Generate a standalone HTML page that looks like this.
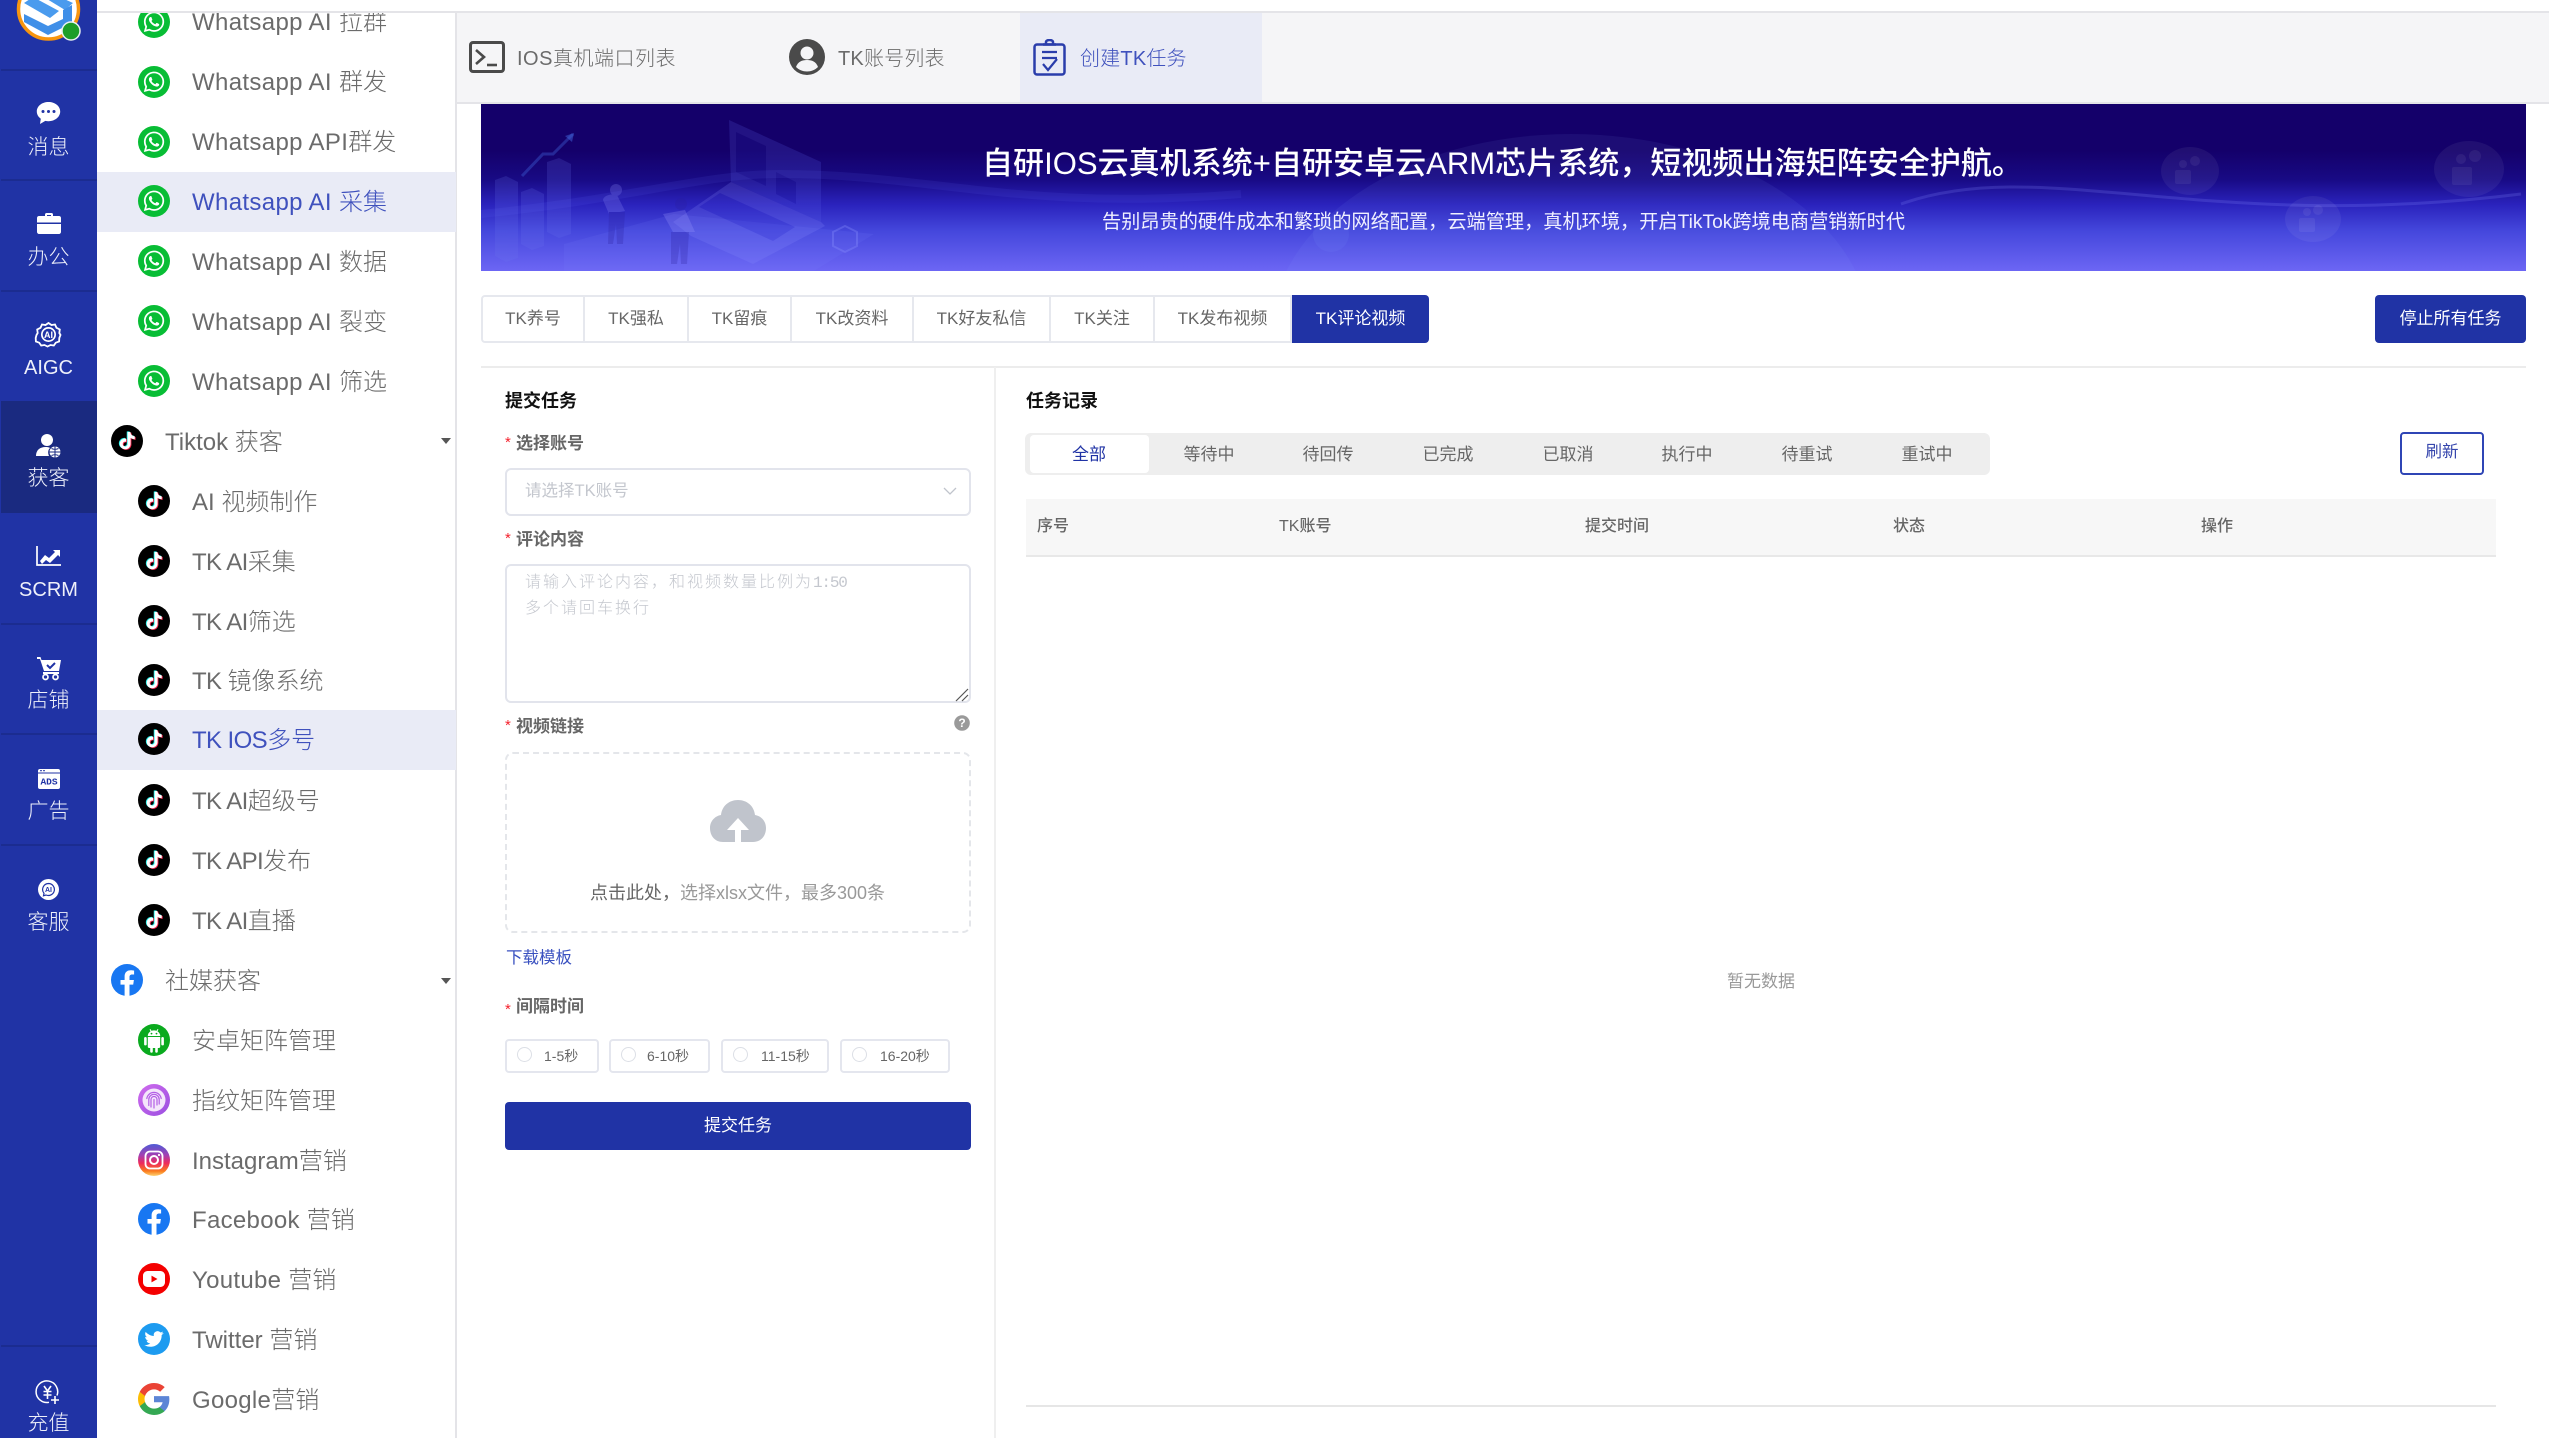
<!DOCTYPE html>
<html lang="zh-CN">
<head>
<meta charset="utf-8">
<title>TK评论视频</title>
<style>
*{box-sizing:border-box;margin:0;padding:0}
html,body{width:2553px;height:1438px;overflow:hidden;background:#fff}
body{position:relative;font-family:"Liberation Sans","Noto Sans CJK SC",sans-serif;color:#666}
.a{position:absolute}
.t{position:absolute;white-space:nowrap;line-height:40px;height:40px}
#nav{position:absolute;left:0;top:0;width:97px;height:1438px;background:#2033a5;overflow:hidden}
#nav .ln{position:absolute;left:1px;width:96px;height:2px;background:#1b2c90}
#nav .lb{position:absolute;left:0;width:97px;text-align:center;color:#eef0fa;font-size:21px;line-height:30px;height:30px;font-weight:300;white-space:nowrap;margin-top:1.5px}
#nav svg{position:absolute;overflow:visible}
#side{position:absolute;left:97px;top:0;width:360px;height:1438px;background:#fff;border-right:2px solid #e4e4e8;overflow:hidden}
.r{position:absolute;left:97px;width:359px;height:60px}
.r.on{background:#e9ebf6}
.ic{position:absolute;width:32px;height:32px}
.rt{position:absolute;left:192px;font-size:24px;line-height:40px;height:40px;white-space:nowrap;color:#6b6b6b;font-weight:300;margin-top:.6px}
.rt.g{left:165px}
.rt.on{color:#3f51bd}
.caret{position:absolute;left:441px;width:0;height:0;border-left:5px solid transparent;border-right:5px solid transparent;border-top:6px solid #555}
.w{letter-spacing:.35px}
.k{letter-spacing:-.6px}
.s{letter-spacing:.3px}
#tb{position:absolute;left:457px;top:11px;width:2092px;height:93px;background:#f5f5f7;border-top:2px solid #e4e4e8;border-bottom:2px solid #e4e4e8}
#tbtop{position:absolute;left:97px;top:0;width:2456px;height:11px;background:#fff}
#tbl{position:absolute;left:97px;top:11px;width:360px;height:2px;background:#e4e4e8}
.tab{position:absolute;top:295px;height:48px;border:2px solid #e6e8ee;border-left:0;font-size:17px;line-height:43px;text-align:center;color:#666;background:#fff}
.req{position:absolute;left:505px;color:#f5222d;font-size:15px;line-height:20px}
.lab{position:absolute;left:516px;font-size:17px;line-height:30px;height:30px;font-weight:700;color:#666;white-space:nowrap;margin-top:1px}
.h{position:absolute;font-size:18px;font-weight:700;color:#111;line-height:30px;white-space:nowrap}
.box{position:absolute;left:505px;width:466px;border:2px solid #e2e4ec;border-radius:6px;background:#fff}
.rd{position:absolute;top:1039px;height:34px;border:2px solid #e4e6ee;border-radius:4px;background:#fff}
.cc{position:absolute;top:1047px;width:15px;height:15px;border:1.5px solid #dcdfe6;border-radius:50%;background:#fff}
.rdt{position:absolute;top:1041px;font-size:14px;line-height:30px;color:#666;white-space:nowrap}
.sg{position:absolute;top:439.5px;width:120px;text-align:center;font-size:17px;line-height:30px;color:#666}
.th{position:absolute;top:512px;font-size:16px;line-height:30px;color:#666;font-weight:500;white-space:nowrap}
</style>
</head>
<body>
<svg width="0" height="0" style="position:absolute">
<defs>
<symbol id="wa" viewBox="0 0 32 32"><circle cx="16" cy="16" r="16" fill="#08bd35"/><g transform="translate(5.8 5.6) scale(.85)"><path fill="#fff" d="M17.472 14.382c-.297-.149-1.758-.867-2.03-.967-.273-.099-.471-.148-.67.15-.197.297-.767.966-.94 1.164-.173.199-.347.223-.644.075-.297-.15-1.255-.463-2.39-1.475-.883-.788-1.48-1.761-1.653-2.059-.173-.297-.018-.458.13-.606.134-.133.298-.347.446-.52.149-.174.198-.298.298-.497.099-.198.05-.371-.025-.52-.075-.149-.669-1.612-.916-2.207-.242-.579-.487-.5-.669-.51-.173-.008-.371-.01-.57-.01-.198 0-.52.074-.792.372-.272.297-1.04 1.016-1.04 2.479 0 1.462 1.065 2.875 1.213 3.074.149.198 2.096 3.2 5.077 4.487.709.306 1.262.489 1.694.625.712.227 1.36.195 1.871.118.571-.085 1.758-.719 2.006-1.413.248-.694.248-1.289.173-1.413-.074-.124-.272-.198-.57-.347m-5.421 7.403h-.004a9.87 9.87 0 01-5.031-1.378l-.361-.214-3.741.982.998-3.648-.235-.374a9.86 9.86 0 01-1.51-5.26c.001-5.45 4.436-9.884 9.888-9.884 2.64 0 5.122 1.03 6.988 2.898a9.825 9.825 0 012.893 6.994c-.003 5.45-4.437 9.884-9.885 9.884m8.413-18.297A11.815 11.815 0 0012.05 0C5.495 0 .16 5.335.157 11.892c0 2.096.547 4.142 1.588 5.945L.057 24l6.305-1.654a11.882 11.882 0 005.683 1.448h.005c6.554 0 11.89-5.335 11.893-11.893a11.821 11.821 0 00-3.48-8.413z"/></g></symbol>
<path id="tkp" d="M12.525.02c1.31-.02 2.61-.01 3.91-.02.08 1.53.63 3.09 1.75 4.17 1.12 1.11 2.7 1.62 4.24 1.79v4.03c-1.44-.05-2.89-.35-4.2-.97-.57-.26-1.1-.59-1.62-.93-.01 2.92.01 5.84-.02 8.75-.08 1.4-.54 2.79-1.35 3.94-1.31 1.92-3.58 3.17-5.91 3.21-1.43.08-2.86-.31-4.08-1.03-2.02-1.19-3.44-3.37-3.65-5.71-.02-.5-.03-1-.01-1.49.18-1.9 1.12-3.72 2.58-4.96 1.66-1.44 3.98-2.13 6.15-1.72.02 1.48-.04 2.96-.04 4.44-.99-.32-2.15-.23-3.02.37-.63.41-1.11 1.04-1.36 1.75-.21.51-.15 1.07-.14 1.61.24 1.64 1.82 3.02 3.5 2.87 1.12-.01 2.19-.66 2.77-1.61.19-.33.4-.67.41-1.06.1-1.79.06-3.57.07-5.36.01-4.03-.01-8.05.02-12.07z"/>
<symbol id="tk" viewBox="0 0 32 32"><circle cx="16" cy="16" r="16" fill="#000"/><g transform="translate(7.6 7) scale(.72)"><use href="#tkp" fill="#25f4ee" transform="translate(-1.2 -.8)"/><use href="#tkp" fill="#fe2c55" transform="translate(1.2 .9)"/><use href="#tkp" fill="#fff"/></g></symbol>
<symbol id="fb" viewBox="0 0 32 32"><circle cx="16" cy="16" r="16" fill="#1877f2"/><path fill="#fff" d="M22.2 20.6l.7-4.6h-4.4v-3c0-1.3.6-2.5 2.6-2.5h2V6.600s-1.8-.3-3.500-.3c-3.600 0-6 2.200-6 6.100V16H9.500v4.600h4.100V32a16 16 0 0 0 4.900 0V20.600z"/></symbol>
<symbol id="an" viewBox="0 0 32 32"><circle cx="16" cy="16" r="16" fill="#0aaa1e"/><path fill="#fff" d="M9.800 13h12.400v9.600a1.400 1.400 0 0 1-1.400 1.400h-1v3.400a1.300 1.300 0 0 1-2.600 0V24h-2.400v3.400a1.300 1.300 0 0 1-2.600 0V24h-1a1.400 1.400 0 0 1-1.400-1.400zM9.800 12a6.200 5.600 0 0 1 12.400 0z"/><rect x="6.100" y="13" width="2.600" height="8.400" rx="1.300" fill="#fff"/><rect x="23.300" y="13" width="2.600" height="8.400" rx="1.300" fill="#fff"/><path stroke="#fff" stroke-width="1" d="M12 5.300l1.400 2.500M20 5.300l-1.400 2.500"/><circle cx="13.500" cy="9.600" r=".9" fill="#0aaa1e"/><circle cx="18.500" cy="9.600" r=".9" fill="#0aaa1e"/></symbol>
<symbol id="fp" viewBox="0 0 32 32"><defs><linearGradient id="fpg" x1="0" y1="0" x2="1" y2="1"><stop offset="0" stop-color="#d06bee"/><stop offset="1" stop-color="#9a4fe0"/></linearGradient></defs><circle cx="16" cy="16" r="16" fill="url(#fpg)"/><circle cx="16" cy="16" r="11.500" fill="#f4e6fb"/><g fill="none" stroke="#b35fe6" stroke-width="1.200" stroke-linecap="round"><path d="M8.800 14.500a7.300 7.300 0 0 1 14.400 0"/><path d="M10.800 21.500v-6a5.200 5.200 0 0 1 10.400 0v4.500"/><path d="M13 23v-7.500a3 3 0 0 1 6 0V21"/><path d="M16 24v-8.500"/></g></symbol>
<symbol id="ig" viewBox="0 0 32 32"><defs><linearGradient id="igg" x1="0" y1="0" x2="0" y2="1"><stop offset="0" stop-color="#4f5bd5"/><stop offset=".35" stop-color="#a33fb3"/><stop offset=".6" stop-color="#ee2a5b"/><stop offset=".85" stop-color="#fa7e1e"/><stop offset="1" stop-color="#fed373"/></linearGradient></defs><circle cx="16" cy="16" r="16" fill="url(#igg)"/><rect x="7.500" y="7.500" width="17" height="17" rx="4.500" fill="none" stroke="#fff" stroke-width="1.800"/><circle cx="16" cy="16" r="4" fill="none" stroke="#fff" stroke-width="2"/><circle cx="21" cy="11" r="1.100" fill="#fff"/></symbol>
<symbol id="yt" viewBox="0 0 32 32"><circle cx="16" cy="16" r="16" fill="#f40000"/><rect x="5" y="8" width="22" height="16" rx="4.500" fill="#fff"/><path d="M13.500 12.600l6 3.400-6 3.400z" fill="#f40000"/></symbol>
<symbol id="tw" viewBox="0 0 32 32"><circle cx="16" cy="16" r="16" fill="#1d9bf0"/><path transform="translate(6.400 6.400) scale(.8)" fill="#fff" d="M23.953 4.570a10 10 0 01-2.825.775 4.958 4.958 0 002.163-2.723c-.951.555-2.005.959-3.127 1.184a4.920 4.920 0 00-8.384 4.482C7.690 8.095 4.067 6.130 1.640 3.162a4.822 4.822 0 00-.666 2.475c0 1.710.870 3.213 2.188 4.096a4.904 4.904 0 01-2.228-.616v.060a4.923 4.923 0 003.946 4.827 4.996 4.996 0 01-2.212.085 4.936 4.936 0 004.604 3.417 9.867 9.867 0 01-6.102 2.105c-.390 0-.779-.023-1.170-.067a13.995 13.995 0 007.557 2.209c9.053 0 13.998-7.496 13.998-13.985 0-.210 0-.420-.015-.630A9.935 9.935 0 0024 4.590z"/></symbol>
<symbol id="gg" viewBox="1 1 22 22"><path fill="#5c85d6" d="M22.560 12.250c0-.780-.070-1.530-.200-2.250H12v4.260h5.920c-.260 1.370-1.040 2.530-2.210 3.310v2.770h3.570c2.080-1.920 3.280-4.740 3.280-8.090z"/><path fill="#34a853" d="M12 23c2.970 0 5.460-.980 7.280-2.660l-3.570-2.770c-.980.660-2.230 1.060-3.710 1.060-2.860 0-5.290-1.930-6.160-4.530H2.180v2.840C3.990 20.530 7.700 23 12 23z"/><path fill="#fbbc05" d="M5.840 14.090c-.220-.660-.350-1.360-.350-2.090s.130-1.430.350-2.090V7.070H2.180C1.430 8.550 1 10.220 1 12s.430 3.450 1.180 4.930l2.850-2.220.810-.620z"/><path fill="#ea4335" d="M12 5.380c1.620 0 3.060.560 4.210 1.640l3.150-3.150C17.450 2.090 14.970 1 12 1 7.700 1 3.990 3.470 2.180 7.070l3.660 2.840c.870-2.600 3.300-4.530 6.160-4.530z"/></symbol>
</defs>
</svg>

<!-- primary nav -->
<div id="nav">
  <!-- logo -->
  <svg style="left:0;top:0" width="97" height="60" viewBox="0 0 97 60">
    <circle cx="48.500" cy="9" r="30" fill="#fff" stroke="#f7950f" stroke-width="3.500"/>
    <path d="M24 3l9-6 26 14-9 7zM42-4l9-3 22 10-8 7z" fill="#4a9bee"/>
    <path d="M24 14v8l24 13 24-12V5l-9 5v9L48 26z" fill="#3f8fe8"/>
    <circle cx="71" cy="31" r="9" fill="#1c9e28" stroke="#e8f0f0" stroke-width="1.500"/>
  </svg>
  <div class="ln" style="top:69px"></div>
  <div class="ln" style="top:179px"></div>
  <div class="ln" style="top:290px"></div>
  <div class="a" style="left:1px;top:401px;width:96px;height:112px;background:#1a2a80"></div>
  <div class="ln" style="top:623px"></div>
  <div class="ln" style="top:733px"></div>
  <div class="ln" style="top:844px"></div>
  <div class="ln" style="top:1345px"></div>

  <svg style="left:36px;top:101px" width="25" height="24" viewBox="0 0 25 24"><path fill="#fff" d="M12.500 1C6 1 .8 5 .8 10.500c0 3 1.600 5.500 4 7.200L4 23l5.300-3.100c1 .2 2.100.3 3.200.3 6.500 0 11.700-4.300 11.700-9.700S19 1 12.500 1z"/><circle cx="7" cy="10.500" r="1.500" fill="#2033a5"/><circle cx="12.500" cy="10.500" r="1.500" fill="#2033a5"/><circle cx="18" cy="10.500" r="1.500" fill="#2033a5"/></svg>
  <div class="lb" style="top:131px">消息</div>

  <svg style="left:37px;top:212px" width="24" height="22" viewBox="0 0 24 22"><path fill="#fff" d="M8 4V2.500C8 1.500 8.800 1 9.500 1h5c.8 0 1.500.6 1.500 1.500V4h6c1 0 2 .8 2 2v4.500H0V6c0-1.200 1-2 2-2zm2 0h4V3h-4zM0 12h24v8c0 1-1 2-2 2H2c-1 0-2-1-2-2z"/></svg>
  <div class="lb" style="top:241px">办公</div>

  <svg style="left:36px;top:322px" width="25" height="25" viewBox="0 0 25 25"><path fill="none" stroke="#fff" stroke-width="1.800" d="M12.500 1l3 2 3.500-.500 1.500 3.300 3.300 1.700-.5 3.500 1.200 2-1.200 3-.2 3.500-3.300 1.200-2 2.800-3.300-.5-3 1.500-3-1.500-3.300.5-2-2.800-3.300-1.200-.2-3.500L.5 13l1.200-2-.5-3.500L4.500 5.800 6 2.500l3.500.5z"/><circle cx="12.500" cy="12.500" r="7.500" fill="#fff"/><circle cx="12.500" cy="12.500" r="5.800" fill="#2033a5"/><text x="12.500" y="16" font-size="9" font-weight="700" fill="#fff" text-anchor="middle" font-family="Liberation Sans">AI</text></svg>
  <div class="lb" style="top:351px;font-size:20px">AIGC</div>

  <svg style="left:36px;top:434px" width="25" height="24" viewBox="0 0 25 24"><circle cx="11" cy="6" r="6" fill="#fff"/><path fill="#fff" d="M0 22c0-6 4-9 9.500-9 2 0 3.500.300 4.500 1-1.800 1.500-2.500 4.500-1 8z"/><circle cx="19" cy="18" r="5.500" fill="#fff"/><path stroke="#1a2a80" stroke-width="1" fill="none" d="M13.500 18h11M19 12.500v11M15.500 14.500c2 1 5 1 7 0M15.500 21.500c2-1 5-1 7 0"/></svg>
  <div class="lb" style="top:462px">获客</div>

  <svg style="left:36px;top:546px" width="25" height="20" viewBox="0 0 25 20"><path fill="none" stroke="#fff" stroke-width="1.700" d="M1 0v19h24"/><path fill="#fff" d="M4 15l5-6 4 3 6-6-2-2h7v7l-2-2-8 8-4-3-4 4z"/></svg>
  <div class="lb" style="top:573px;font-size:20px">SCRM</div>

  <svg style="left:37px;top:656px" width="24" height="24" viewBox="0 0 24 24"><path fill="#fff" d="M0 1h3.500l1 3H24l-2 11H7L3 3H0z"/><path fill="#fff" d="M6 16h16v2H6z"/><circle cx="8.500" cy="21" r="2.500" fill="none" stroke="#fff" stroke-width="1.700"/><circle cx="18.500" cy="21" r="2.500" fill="none" stroke="#fff" stroke-width="1.700"/><path fill="none" stroke="#2033a5" stroke-width="2" d="M10 9l3 3 5-5"/></svg>
  <div class="lb" style="top:684px">店铺</div>

  <svg style="left:38px;top:769px" width="22" height="20" viewBox="0 0 22 20"><rect width="22" height="20" rx="2" fill="#fff"/><rect x="0" y="3.500" width="22" height="1" fill="#2033a5"/><rect x="2" y="1.200" width="2" height="1" fill="#2033a5"/><rect x="5" y="1.200" width="2" height="1" fill="#2033a5"/><text x="11" y="15.500" font-size="9.500" font-weight="700" fill="#2033a5" text-anchor="middle" font-family="Liberation Mono">ADS</text></svg>
  <div class="lb" style="top:795px">广告</div>

  <svg style="left:38px;top:879px" width="21" height="21" viewBox="0 0 21 21"><circle cx="10.500" cy="10.500" r="10.500" fill="#fff"/><path fill="none" stroke="#2033a5" stroke-width="1.200" d="M10.500 4.500a6 6 0 1 1-2.500 11.500l-2.500.8.500-2.500a6 6 0 0 1 4.500-9.800z"/><text x="10.500" y="13" font-size="7" font-weight="700" fill="#2033a5" text-anchor="middle" font-family="Liberation Sans">AI</text></svg>
  <div class="lb" style="top:906px">客服</div>

  <svg style="left:36px;top:1380px" width="25" height="25" viewBox="0 0 25 25"><path fill="none" stroke="#fff" stroke-width="1.500" d="M21 15.500A10.800 10.800 0 1 0 13 22.300"/><path fill="none" stroke="#fff" stroke-width="1.600" d="M8 6l3.500 5L15 6M7.500 11.500h8M7.500 15h8M11.500 11v8M15 20h8M19 16v8"/></svg>
  <div class="lb" style="top:1407px">充值</div>
</div>

<!-- secondary nav -->
<div id="side"></div>
<div class="r on" style="top:172px"></div>
<div class="r on" style="top:710px"></div>

<svg class="ic" style="left:138px;top:6px"><use href="#wa"/></svg><div class="rt" style="top:2px"><span class="w">Whatsapp AI </span>拉群</div>
<svg class="ic" style="left:138px;top:66px"><use href="#wa"/></svg><div class="rt" style="top:62px"><span class="w">Whatsapp AI </span>群发</div>
<svg class="ic" style="left:138px;top:126px"><use href="#wa"/></svg><div class="rt" style="top:122px"><span class="w">Whatsapp API</span>群发</div>
<svg class="ic" style="left:138px;top:185px"><use href="#wa"/></svg><div class="rt on" style="top:182px"><span class="w">Whatsapp AI </span>采集</div>
<svg class="ic" style="left:138px;top:245px"><use href="#wa"/></svg><div class="rt" style="top:242px"><span class="w">Whatsapp AI </span>数据</div>
<svg class="ic" style="left:138px;top:305px"><use href="#wa"/></svg><div class="rt" style="top:302px"><span class="w">Whatsapp AI </span>裂变</div>
<svg class="ic" style="left:138px;top:365px"><use href="#wa"/></svg><div class="rt" style="top:362px"><span class="w">Whatsapp AI </span>筛选</div>

<svg class="ic" style="left:111px;top:425px"><use href="#tk"/></svg><div class="rt g" style="top:422px">Tiktok 获客</div><div class="caret" style="top:438px"></div>
<svg class="ic" style="left:138px;top:485px"><use href="#tk"/></svg><div class="rt" style="top:482px">AI 视频制作</div>
<svg class="ic" style="left:138px;top:545px"><use href="#tk"/></svg><div class="rt" style="top:542px"><span class="k">TK AI</span>采集</div>
<svg class="ic" style="left:138px;top:605px"><use href="#tk"/></svg><div class="rt" style="top:602px"><span class="k">TK AI</span>筛选</div>
<svg class="ic" style="left:138px;top:664px"><use href="#tk"/></svg><div class="rt" style="top:661px"><span class="k">TK </span>镜像系统</div>
<svg class="ic" style="left:138px;top:723px"><use href="#tk"/></svg><div class="rt on" style="top:720px"><span class="k">TK IOS</span>多号</div>
<svg class="ic" style="left:138px;top:784px"><use href="#tk"/></svg><div class="rt" style="top:781px"><span class="k">TK AI</span>超级号</div>
<svg class="ic" style="left:138px;top:844px"><use href="#tk"/></svg><div class="rt" style="top:841px"><span class="k">TK API</span>发布</div>
<svg class="ic" style="left:138px;top:904px"><use href="#tk"/></svg><div class="rt" style="top:901px"><span class="k">TK AI</span>直播</div>

<svg class="ic" style="left:111px;top:964px"><use href="#fb"/></svg><div class="rt g" style="top:961px">社媒获客</div><div class="caret" style="top:978px"></div>
<svg class="ic" style="left:138px;top:1024px"><use href="#an"/></svg><div class="rt" style="top:1021px">安卓矩阵管理</div>
<svg class="ic" style="left:138px;top:1084px"><use href="#fp"/></svg><div class="rt" style="top:1081px">指纹矩阵管理</div>
<svg class="ic" style="left:138px;top:1144px"><use href="#ig"/></svg><div class="rt" style="top:1141px">Instagram营销</div>
<svg class="ic" style="left:138px;top:1203px"><use href="#fb"/></svg><div class="rt" style="top:1200px"><span class="s">Facebook </span>营销</div>
<svg class="ic" style="left:138px;top:1263px"><use href="#yt"/></svg><div class="rt" style="top:1260px"><span class="s">Youtube </span>营销</div>
<svg class="ic" style="left:138px;top:1323px"><use href="#tw"/></svg><div class="rt" style="top:1320px">Twitter 营销</div>
<svg class="ic" style="left:138px;top:1383px"><use href="#gg"/></svg><div class="rt" style="top:1380px"><span class="s">Google</span>营销</div>

<!-- top strip -->
<div id="tbtop"></div>
<div id="tbl"></div>
<div id="tb"></div>
<div class="a" style="left:1020px;top:13px;width:242px;height:89px;background:#e9ebf6"></div>

<svg class="a" style="left:469px;top:41px" width="36" height="32" viewBox="0 0 36 32"><rect x="1.500" y="1.500" width="33" height="29" rx="2.500" fill="none" stroke="#4a4a4a" stroke-width="3"/><path d="M7 9l8 7-8 7" fill="none" stroke="#4a4a4a" stroke-width="2.600"/><path d="M18 24h10" stroke="#4a4a4a" stroke-width="2.600"/></svg>
<div class="t" style="left:517px;top:38.5px;font-size:20px;color:#6b6b6b;font-weight:300;letter-spacing:.5px">IOS真机端口列表</div>

<svg class="a" style="left:789px;top:39px" width="36" height="36" viewBox="0 0 36 36"><circle cx="18" cy="18" r="18" fill="#4a4a4a"/><circle cx="18" cy="14" r="6.500" fill="#f5f5f7"/><path d="M7 28c2-5.500 6-7 11-7s9 1.500 11 7c-3 3-7 4.500-11 4.500S10 31 7 28z" fill="#f5f5f7"/></svg>
<div class="t" style="left:838px;top:38.5px;font-size:20px;color:#6b6b6b;font-weight:300;letter-spacing:.2px">TK账号列表</div>

<svg class="a" style="left:1033px;top:39px" width="33" height="37" viewBox="0 0 33 37"><rect x="1.500" y="5.500" width="30" height="30" rx="2.500" fill="none" stroke="#2a3dab" stroke-width="2.500"/><path d="M10 5.500h13M13 5.500V3a3.500 2 0 0 1 7 0v2.500" fill="none" stroke="#2a3dab" stroke-width="2.500"/><path d="M9 13h15M9 19h15" stroke="#2a3dab" stroke-width="2.200"/><path d="M10 25l5 6 9-11" fill="none" stroke="#2a3dab" stroke-width="2.200"/></svg>
<div class="t" style="left:1080px;top:38.5px;font-size:20px;color:#3f51bd;font-weight:300;letter-spacing:.2px">创建TK任务</div>

<!-- banner -->
<div class="a" style="left:481px;top:104px;width:2045px;height:167px;overflow:hidden;background:linear-gradient(180deg,#14006a 0,#14006a 28%,#180a84 45%,#2a22bc 60%,#4447dc 76%,#6c66f4 100%)">
  <svg width="2045" height="167" viewBox="0 0 2045 167" style="position:absolute;left:0;top:0">
    <g fill="#6f78f0" opacity=".18">
      <path d="M14 76l11-4 12 6v76l-12 4-11-6z"/>
      <path d="M40 88l11-4 12 6v52l-12 4-11-6z"/>
      <path d="M66 58l12-4 12 6v70l-12 4-12-6z"/>
    </g>
    <path d="M41 72l21-22h10l20-20" fill="none" stroke="#3f62d8" stroke-width="3" opacity=".4"/>
    <path d="M84 32l9-3-2 9z" fill="#3f62d8" opacity=".5"/>
    <path d="M83 140l110-30 200 20 -60 37H83z" fill="#7a80ff" opacity=".12"/>
    <g opacity=".2">
      <path d="M248 16l92 42v60l-90-40z" fill="#5a60e8"/>
      <path d="M250 78l90 40 4 4-72 38-62-28-18-14z" fill="#8d90ff"/>
      <path d="M218 103l21-14 75 34-22 14z" fill="#4a48e0"/>
      <path d="M255 28l30 14v40l-30-14zM295 68l20 10v22l-20-10z" fill="#2c2bb8"/>
    </g>
    <g opacity=".25" fill="#8e8cf6">
      <circle cx="135" cy="86" r="6"/><path d="M122 96c0-4 8-7 14-5l8 16-16 3z"/>
      <path d="M128 108h16l-2 32h-6l-1-20-3 20h-5z" fill="#2a1e9c"/>
      <circle cx="200" cy="100" r="6" fill="#2a1e9c"/><path d="M182 110l22-4 10 22h-22z" fill="#a09cff"/>
      <path d="M190 128h18l-2 32h-6l-1-20-3 20h-6z" fill="#2a1e9c"/>
    </g>
    <path d="M352 128l12-6 12 6v14l-12 6-12-6z" fill="none" stroke="#8f96ff" stroke-width="2" opacity=".3"/>
    <path d="M0 110C150 95 220 70 300 70c150 0 240 38 460 20" fill="none" stroke="#6b72ff" stroke-width="8" opacity=".1"/>
    <path d="M1420 100c140-50 300 30 620-10" fill="none" stroke="#8a90ff" stroke-width="3" opacity=".2"/>
    <ellipse cx="1090" cy="230" rx="300" ry="200" fill="#8fa0ff" opacity=".08"/>
    <ellipse cx="850" cy="130" rx="18" ry="18" fill="#7fa0ff" opacity=".1"/>
    <ellipse cx="1709" cy="67" rx="29" ry="24" fill="#fff" opacity=".06"/>
    <ellipse cx="1988" cy="65" rx="35" ry="28" fill="#fff" opacity=".06"/>
    <ellipse cx="1832" cy="115" rx="28" ry="23" fill="#fff" opacity=".06"/>
    <g fill="#fff" opacity=".06">
      <circle cx="1714" cy="57" r="5"/><circle cx="1702" cy="60" r="4"/><rect x="1694" y="66" width="16" height="14" rx="2"/>
      <circle cx="1994" cy="52" r="6"/><circle cx="1980" cy="55" r="5"/><rect x="1971" y="63" width="20" height="18" rx="2"/>
      <circle cx="1837" cy="106" r="5"/><circle cx="1826" cy="108" r="4"/><rect x="1818" y="114" width="16" height="14" rx="2"/>
    </g>
  </svg>
</div>
<div class="t" style="left:982px;top:144px;font-size:31.050px;font-weight:500;color:#fff">自研IOS云真机系统+自研安卓云ARM芯片系统，短视频出海矩阵安全护航。</div>
<div class="t" style="left:1102px;top:203px;font-size:19.200px;color:#f0f0ff">告别昂贵的硬件成本和繁琐的网络配置，云端管理，真机环境，开启TikTok跨境电商营销新时代</div>

<!-- tabs -->
<div class="tab" style="left:481px;width:104px;border-left:2px solid #e6e8ee;border-radius:4px 0 0 4px">TK养号</div>
<div class="tab" style="left:585px;width:104px">TK强私</div>
<div class="tab" style="left:689px;width:103px">TK留痕</div>
<div class="tab" style="left:792px;width:122px">TK改资料</div>
<div class="tab" style="left:914px;width:137px">TK好友私信</div>
<div class="tab" style="left:1051px;width:104px">TK关注</div>
<div class="tab" style="left:1155px;width:137px">TK发布视频</div>
<div class="tab" style="left:1292px;width:137px;background:#2033a5;border:0;color:#fff;border-radius:0 4px 4px 0;line-height:47px">TK评论视频</div>
<div class="a" style="left:2375px;top:295px;width:151px;height:48px;background:#2033a5;border-radius:4px;color:#fff;font-size:17px;line-height:47px;text-align:center">停止所有任务</div>
<div class="a" style="left:481px;top:366px;width:2045px;height:2px;background:#ececec"></div>
<div class="a" style="left:994px;top:367px;width:2px;height:1071px;background:#efefef"></div>

<!-- form -->
<div class="h" style="left:505px;top:385.5px">提交任务</div>

<div class="req" style="top:433px">*</div><div class="lab" style="top:428px">选择账号</div>
<div class="box" style="top:468px;height:48px"></div>
<div class="t" style="left:525px;top:471px;font-size:16.500px;color:#c4c7ce">请选择TK账号</div>
<svg class="a" style="left:943px;top:487px" width="14" height="9" viewBox="0 0 14 9"><path d="M1 1l6 6 6-6" fill="none" stroke="#c0c4cc" stroke-width="1.300"/></svg>

<div class="req" style="top:529px">*</div><div class="lab" style="top:524px">评论内容</div>
<div class="box" style="top:564px;height:139px"></div>
<div class="t" style="left:525px;top:563px;font-size:16px;letter-spacing:2px;color:#c4c7ce;font-weight:300">请输入评论内容，和视频数量比例为<span style="font-family:'Liberation Mono';letter-spacing:-1.200px">1:50</span></div>
<div class="t" style="left:525px;top:589px;font-size:16px;letter-spacing:2px;color:#c4c7ce;font-weight:300">多个请回车换行</div>
<svg class="a" style="left:955px;top:688px" width="14" height="14" viewBox="0 0 14 14"><path d="M1 13L13 1M7 13l6-6" stroke="#555" stroke-width="1.200"/></svg>

<div class="req" style="top:716px">*</div><div class="lab" style="top:711px">视频链接</div>
<svg class="a" style="left:954px;top:715px" width="16" height="16" viewBox="0 0 16 16"><circle cx="8" cy="8" r="7.800" fill="#9a9a9a"/><text x="8" y="12.200" font-size="12" font-weight="700" fill="#fff" text-anchor="middle" font-family="Liberation Sans">?</text></svg>
<div class="a" style="left:505px;top:752px;width:466px;height:181px;border:2px dashed #e4e6ea;border-radius:8px"></div>
<svg class="a" style="left:710px;top:800px" width="56" height="42" viewBox="0 0 56 42"><path fill="#c0c4cc" d="M13 42C5 42 0 36 0 28c0-7 5-12 11-13C12 6 19 0 28 0s16 6 17 15c6 1 11 6 11 13 0 8-5 14-13 14H31V30h8L28 18 17 30h8v12z"/></svg>
<div class="t" style="left:590px;top:872.5px;font-size:18px;color:#999"><span style="color:#666">点击此处，</span>选择xlsx文件，最多300条</div>
<div class="t" style="left:506px;top:938px;font-size:16.500px;color:#3a51c0">下载模板</div>

<div class="req" style="top:1000px">*</div><div class="lab" style="top:991px">间隔时间</div>
<div class="rd" style="left:505px;width:94px"></div><div class="cc" style="left:517px"></div><div class="rdt" style="left:544px">1-5秒</div>
<div class="rd" style="left:609px;width:101px"></div><div class="cc" style="left:621px"></div><div class="rdt" style="left:647px">6-10秒</div>
<div class="rd" style="left:721px;width:108px"></div><div class="cc" style="left:733px"></div><div class="rdt" style="left:761px">11-15秒</div>
<div class="rd" style="left:840px;width:110px"></div><div class="cc" style="left:852px"></div><div class="rdt" style="left:880px">16-20秒</div>
<div class="a" style="left:505px;top:1102px;width:466px;height:48px;background:#2033a5;border-radius:4px;color:#fff;font-size:17px;line-height:47px;text-align:center">提交任务</div>

<!-- records -->
<div class="h" style="left:1026px;top:386px">任务记录</div>
<div class="a" style="left:1025px;top:433px;width:965px;height:42px;background:#eeeeee;border-radius:6px"></div>
<div class="a" style="left:1030px;top:435px;width:119px;height:38px;background:#fff;border-radius:4px"></div>
<div class="sg" style="left:1029px;color:#2033a5">全部</div>
<div class="sg" style="left:1149px">等待中</div>
<div class="sg" style="left:1268px">待回传</div>
<div class="sg" style="left:1388px">已完成</div>
<div class="sg" style="left:1508px">已取消</div>
<div class="sg" style="left:1627px">执行中</div>
<div class="sg" style="left:1747px">待重试</div>
<div class="sg" style="left:1867px">重试中</div>
<div class="a" style="left:2400px;top:432px;width:84px;height:43px;border:2px solid #2f45b5;border-radius:4px;color:#3646ad;font-size:16.500px;line-height:36px;text-align:center">刷新</div>

<div class="a" style="left:1026px;top:499px;width:1470px;height:58px;background:#f7f7f7;border-bottom:2px solid #e8e8e8"></div>
<div class="th" style="left:1037px">序号</div>
<div class="th" style="left:1279px">TK账号</div>
<div class="th" style="left:1585px">提交时间</div>
<div class="th" style="left:1893px">状态</div>
<div class="th" style="left:2201px">操作</div>
<div class="t" style="left:1727px;top:961.5px;font-size:17px;color:#999">暂无数据</div>
<div class="a" style="left:1026px;top:1405px;width:1470px;height:2px;background:#e6e6e6"></div>
</body>
</html>
